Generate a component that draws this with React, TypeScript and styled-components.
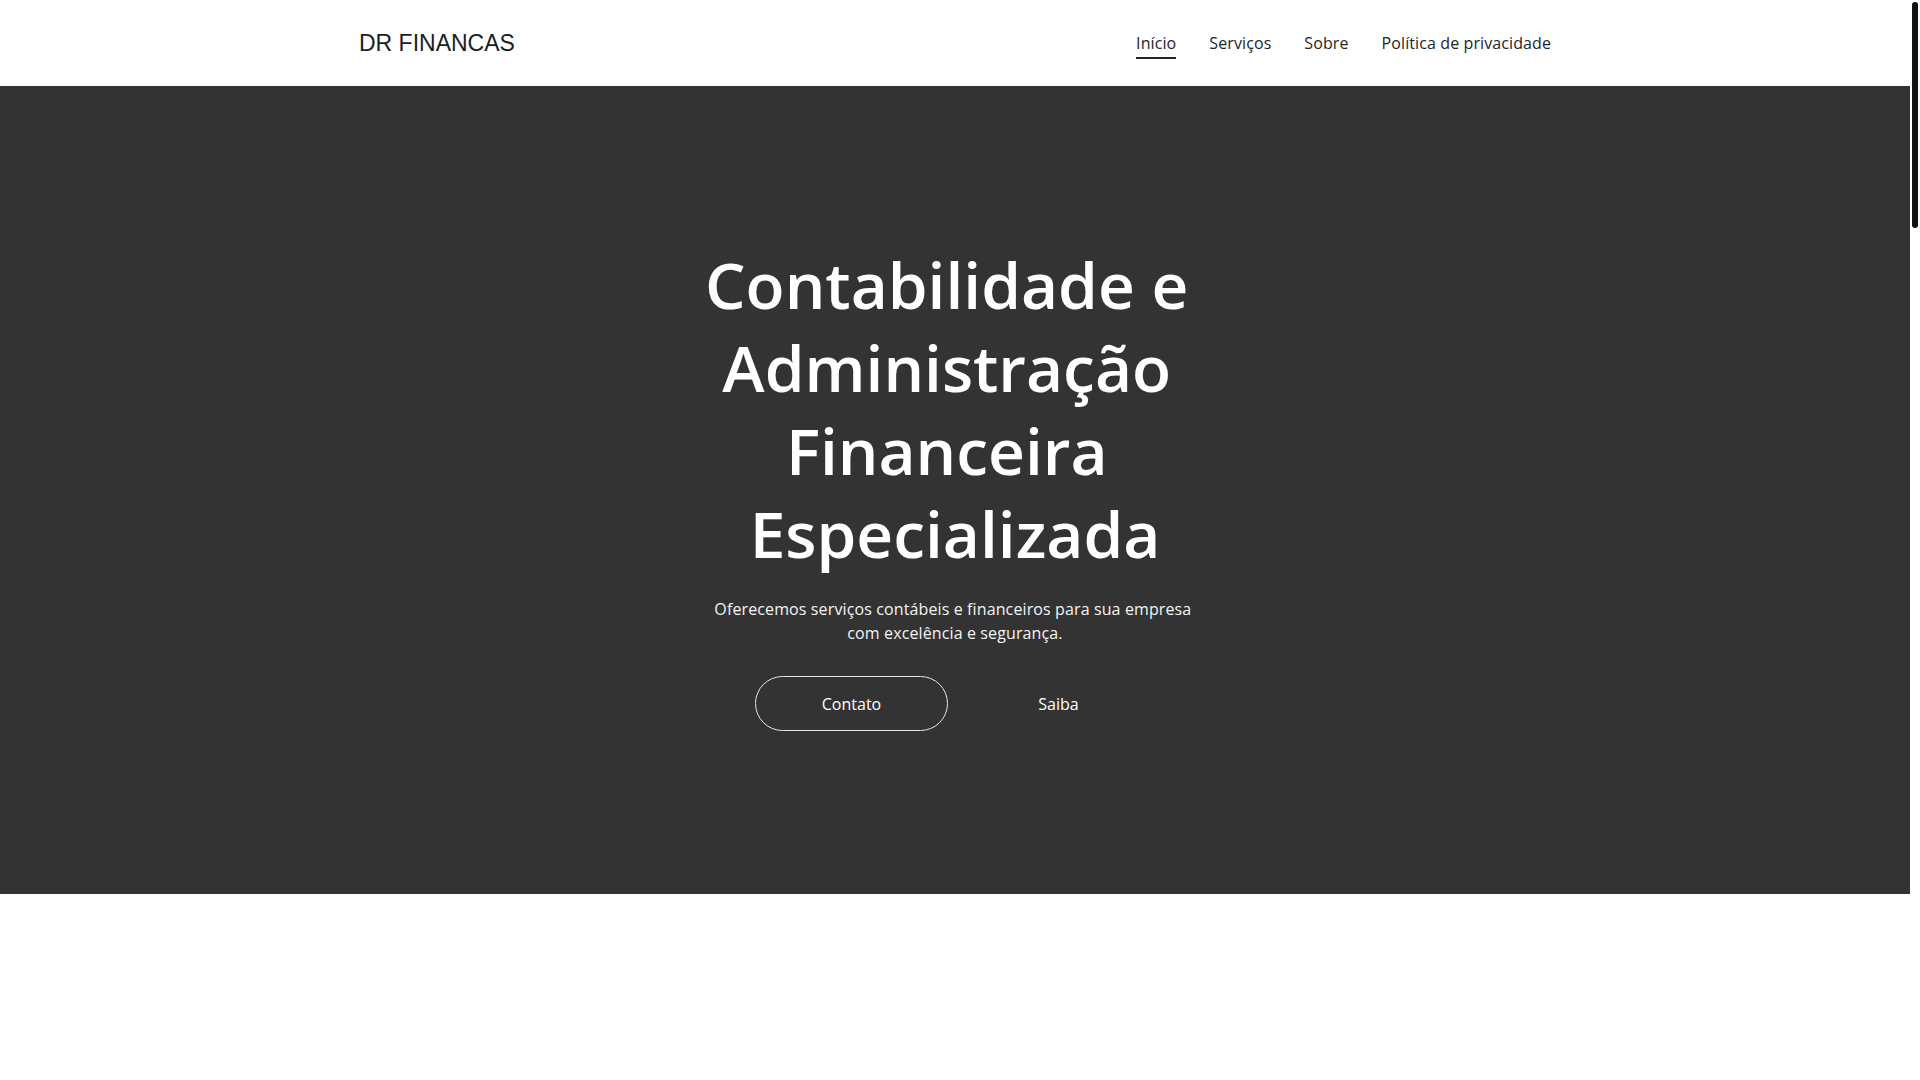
import React from 'react';
import styled, { createGlobalStyle } from 'styled-components';

const GlobalStyle = createGlobalStyle`
  html, body {
    margin: 0;
    padding: 0;
    background: #ffffff;
    overflow: hidden;
  }
  body {
    font-family: 'Open Sans', 'Noto Sans', sans-serif;
    color: #212529;
  }
`;

const Viewport = styled.div`
  height: 100vh;
  display: flex;
  overflow: hidden;
`;

const Page = styled.div`
  flex: 1;
  min-width: 0;
  display: flex;
  flex-direction: column;
`;

const ScrollRail = styled.div`
  width: 10px;
  flex-shrink: 0;
  background: #ffffff;
  padding: 2px;
  box-sizing: border-box;
`;

const ScrollThumb = styled.div`
  height: 226px;
  border-radius: 3px;
  background: #111111;
`;

const Header = styled.header`
  height: 86px;
  flex-shrink: 0;
  background: #ffffff;
  display: flex;
  justify-content: center;
`;

const HeaderInner = styled.div`
  width: 1192px;
  display: flex;
  align-items: center;
  justify-content: space-between;
`;

const Logo = styled.a`
  font-family: 'Liberation Sans', Arial, sans-serif;
  font-size: 23px;
  color: #1a1e23;
  text-decoration: none;
`;

const Nav = styled.nav`
  display: flex;
  align-items: center;
  gap: 33px;
`;

const NavLink = styled.a<{ $active?: boolean }>`
  font-size: 16px;
  letter-spacing: 0.1px;
  color: #212529;
  text-decoration: none;
  line-height: 24px;
  padding-bottom: 2px;
  border-bottom: 2px solid ${(p) => (p.$active ? '#212529' : 'transparent')};
  margin-top: 4px;
`;

const Hero = styled.section`
  height: 808px;
  flex-shrink: 0;
  box-sizing: border-box;
  padding-bottom: 6px;
  background: #333333;
  display: flex;
  flex-direction: column;
  align-items: center;
  justify-content: center;
  color: #ffffff;
  text-align: center;
`;

const HeroContent = styled.div`
  width: 500px;
  display: flex;
  flex-direction: column;
  align-items: center;
`;

const Title = styled.h1`
  margin: 0 0 22px;
  font-size: 64px;
  line-height: 1.3;
  font-weight: 600;
  white-space: break-spaces;
`;

const Subtitle = styled.p`
  margin: 0 0 31px;
  font-size: 16px;
  line-height: 24px;
  letter-spacing: 0.12px;
  color: #f4f4f4;
  white-space: break-spaces;
`;

const Actions = styled.div`
  display: flex;
  gap: 14px;
`;

const Button = styled.a<{ $outline?: boolean }>`
  box-sizing: border-box;
  width: 193px;
  height: 55px;
  display: flex;
  align-items: center;
  justify-content: center;
  font-size: 16px;
  color: #ffffff;
  text-decoration: none;
  border-radius: 28px;
  border: 1px solid ${(p) => (p.$outline ? '#e6e6e6' : 'transparent')};
`;

const Body = styled.main`
  flex: 1;
  background: #ffffff;
`;

export default function App() {
  return (
    <>
      <GlobalStyle />
      <Viewport>
        <Page>
          <Header>
            <HeaderInner>
              <Logo href='#'>DR FINANCAS</Logo>
              <Nav>
                <NavLink href='#' $active>
                  Início
                </NavLink>
                <NavLink href='#'>Serviços</NavLink>
                <NavLink href='#'>Sobre</NavLink>
                <NavLink href='#'>Política de privacidade</NavLink>
              </Nav>
            </HeaderInner>
          </Header>
          <Hero>
            <HeroContent>
              <Title>Contabilidade e Administração Financeira Especializada</Title>
              <Subtitle>Oferecemos serviços contábeis e financeiros para sua empresa com excelência e segurança.</Subtitle>
              <Actions>
                <Button href='#' $outline>
                  Contato
                </Button>
                <Button href='#'>Saiba</Button>
              </Actions>
            </HeroContent>
          </Hero>
          <Body />
        </Page>
        <ScrollRail>
          <ScrollThumb />
        </ScrollRail>
      </Viewport>
    </>
  );
}
